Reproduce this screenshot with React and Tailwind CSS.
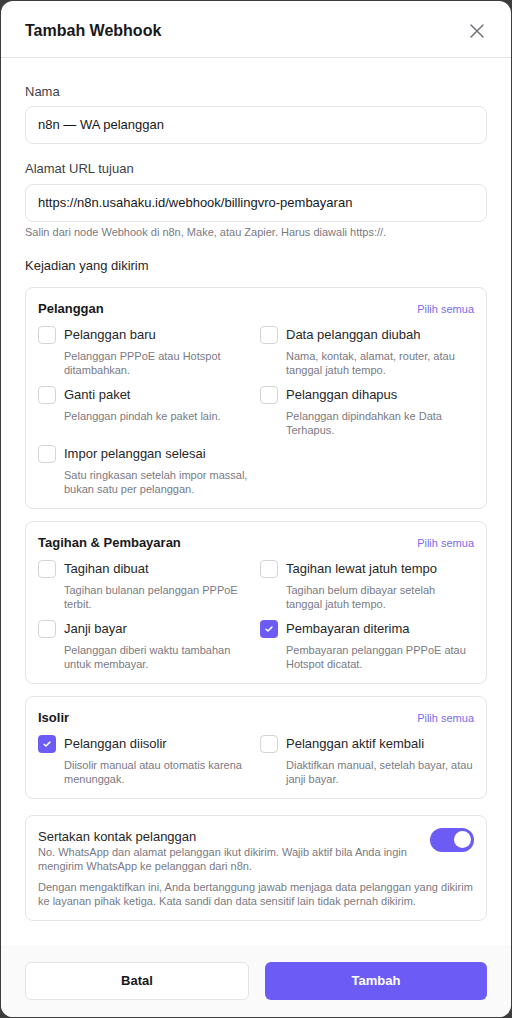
import React from "react";

function Box({ checked }) {
  if (checked) {
    return (
      <span className="flex h-[18px] w-[18px] shrink-0 items-center justify-center rounded-[4px] bg-[#6c5cf5]">
        <svg width="10" height="10" viewBox="0 0 24 24" fill="none" stroke="white" strokeWidth="3.5" strokeLinecap="round" strokeLinejoin="round">
          <path d="M5 12.5l4.5 4.5L19 7.5" />
        </svg>
      </span>
    );
  }
  return <span className="block h-[18px] w-[18px] shrink-0 rounded-[4px] border-[1.5px] border-[#d4d4d8] bg-white" />;
}

function Item({ label, desc, checked }) {
  return (
    <div className="flex items-start gap-2">
      <Box checked={checked} />
      <div className="min-w-0">
        <div className="text-[13px] leading-[18px] text-[#27272a]">{label}</div>
        <div className="mt-[5px] text-[11px] leading-[14px] text-[#7a7a84]">{desc}</div>
      </div>
    </div>
  );
}

function Group({ title, items }) {
  return (
    <div className="rounded-lg border border-[#e4e4e7] bg-white px-3 pb-3 pt-3">
      <div className="mb-[9px] flex h-[17px] items-end justify-between">
        <span className="text-[13px] font-bold leading-4 text-[#18181b]">{title}</span>
        <span className="text-[11px] leading-4 text-[#7b6cec]">Pilih semua</span>
      </div>
      <div className="grid grid-cols-2 gap-x-2 gap-y-[8.5px]">
        {items.map((it) => (
          <Item key={it.label} {...it} />
        ))}
      </div>
    </div>
  );
}

export default function App() {
  return (
    <div className="min-h-[1018px] bg-[#3d3d3d] p-px" style={{ fontFamily: '"Liberation Sans", Arial, sans-serif' }}>
      <div className="overflow-hidden rounded-xl bg-white">
        <div className="flex h-[57px] items-center justify-between border-b border-[#e4e4e7] px-6 pt-[3px]">
          <h1 className="text-[16px] font-bold leading-6 text-[#18181b]">Tambah Webhook</h1>
          <svg width="14" height="14" viewBox="0 0 14 14" fill="none" stroke="#71717a" strokeWidth="1.5" strokeLinecap="round" className="mr-[3px]">
            <path d="M1 1l12 12M13 1L1 13" />
          </svg>
        </div>

        <div className="px-6 pb-6 pt-[25px]">
          <label className="block text-[13px] leading-[18px] text-[#3f3f46]">Nama</label>
          <div className="mt-[5px] flex h-[38px] items-center rounded-lg border border-[#e4e4e7] px-3 text-[13px] text-[#18181b]">
            n8n — WA pelanggan
          </div>

          <label className="mt-4 block text-[13px] leading-[18px] text-[#3f3f46]">Alamat URL tujuan</label>
          <div className="mt-[6px] flex h-[38px] items-center rounded-lg border border-[#e4e4e7] px-3 text-[13px] text-[#18181b]">
            https://n8n.usahaku.id/webhook/billingvro-pembayaran
          </div>
          <p className="mt-[3px] text-[11px] leading-[14px] text-[#7a7a84]">
            Salin dari node Webhook di n8n, Make, atau Zapier. Harus diawali https://.
          </p>

          <div className="mt-[18px] text-[13px] leading-[18px] text-[#27272a]">Kejadian yang dikirim</div>

          <div className="mt-3 flex flex-col gap-3">
            <Group
              title="Pelanggan"
              items={[
                { label: "Pelanggan baru", desc: "Pelanggan PPPoE atau Hotspot ditambahkan." },
                { label: "Data pelanggan diubah", desc: "Nama, kontak, alamat, router, atau tanggal jatuh tempo." },
                { label: "Ganti paket", desc: "Pelanggan pindah ke paket lain." },
                { label: "Pelanggan dihapus", desc: "Pelanggan dipindahkan ke Data Terhapus." },
                { label: "Impor pelanggan selesai", desc: "Satu ringkasan setelah impor massal, bukan satu per pelanggan." },
              ]}
            />
            <Group
              title="Tagihan & Pembayaran"
              items={[
                { label: "Tagihan dibuat", desc: "Tagihan bulanan pelanggan PPPoE terbit." },
                { label: "Tagihan lewat jatuh tempo", desc: "Tagihan belum dibayar setelah tanggal jatuh tempo." },
                { label: "Janji bayar", desc: "Pelanggan diberi waktu tambahan untuk membayar." },
                { label: "Pembayaran diterima", desc: "Pembayaran pelanggan PPPoE atau Hotspot dicatat.", checked: true },
              ]}
            />
            <Group
              title="Isolir"
              items={[
                { label: "Pelanggan diisolir", desc: "Diisolir manual atau otomatis karena menunggak.", checked: true },
                { label: "Pelanggan aktif kembali", desc: "Diaktifkan manual, setelah bayar, atau janji bayar." },
              ]}
            />
          </div>

          <div className="mt-4 rounded-lg border border-[#e4e4e7] bg-white px-3 pb-3 pt-3">
            <div className="flex items-start gap-3">
              <div className="min-w-0 flex-1">
                <div className="text-[13px] leading-[17px] text-[#27272a]">Sertakan kontak pelanggan</div>
                <div className="text-[11px] leading-[14px] text-[#7a7a84]">
                  No. WhatsApp dan alamat pelanggan ikut dikirim. Wajib aktif bila Anda ingin mengirim WhatsApp ke pelanggan dari n8n.
                </div>
              </div>
              <div className="flex h-6 w-11 shrink-0 items-center justify-end rounded-full bg-[#6c5cf5] pr-[3px]">
                <span className="block h-[17px] w-[17px] rounded-full bg-white" />
              </div>
            </div>
            <p className="mt-[7px] text-[11px] leading-[14px] text-[#7a7a84]">
              Dengan mengaktifkan ini, Anda bertanggung jawab menjaga data pelanggan yang dikirim ke layanan pihak ketiga. Kata sandi dan data sensitif lain tidak pernah dikirim.
            </p>
          </div>
        </div>

        <div className="flex gap-4 bg-[#fafafa] px-6 pb-[17px] pt-[17px]">
          <button className="flex h-[38px] flex-1 items-center justify-center rounded-md border border-[#e4e4e7] bg-white text-[13px] font-bold text-[#18181b]">
            Batal
          </button>
          <button className="flex h-[38px] flex-1 items-center justify-center rounded-md bg-[#6c5cf5] text-[13px] font-bold text-white">
            Tambah
          </button>
        </div>
      </div>
    </div>
  );
}
